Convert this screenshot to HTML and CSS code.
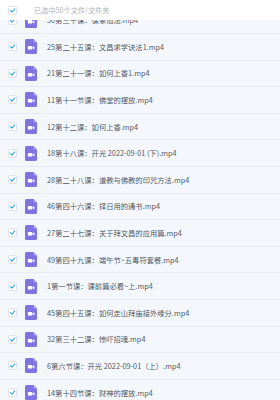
FILE: index.html
```html
<!DOCTYPE html>
<html lang="zh-CN">
  <head>
    <meta charset="utf-8">
    <title>已选中文件</title>
    <link rel="stylesheet" href="styles.css">
  </head>
  <body>
    <div class="picker">
      <div class="picker-head">
        <span class="check"><svg viewBox="0 0 10 10"><path d="M2 5.2 L4.2 7.3 L8.2 2.8"/></svg></span>
        <span class="head-text">已选中50个文件/文件夹</span>
      </div>
      <ul class="files" id="files"></ul>
    </div>
    <script>
      var names = [
        '30第三十课：保家仙法.mp4',
        '25第二十五课：文昌求学诀法1.mp4',
        '21第二十一课：如何上香1.mp4',
        '11第十一节课：佛堂的摆放.mp4',
        '12第十二课：如何上香.mp4',
        '18第十八课：开光 2022-09-01 (下).mp4',
        '28第二十八课：道教与佛教的印咒方法.mp4',
        '46第四十六课：择日用的通书.mp4',
        '27第二十七课：关于拜文昌的应用篇.mp4',
        '49第四十九课：端午节~五毒符套餐.mp4',
        '1第一节课：课前篇必看~上.mp4',
        '45第四十五课：如何走山拜庙接外缘分.mp4',
        '32第三十二课：惊吓招魂.mp4',
        '6第六节课：开光 2022-09-01（上）.mp4',
        '14第十四节课：财神的摆放.mp4'
      ];
      var list = document.getElementById('files');
      var icon = '<svg class="icon" viewBox="0 0 12 15">' +
        '<path class="sheet" d="M1.5 0 H8.5 L12 3.5 V13.5 Q12 15 10.5 15 H1.5 Q0 15 0 13.5 V1.5 Q0 0 1.5 0 Z"/>' +
        '<path class="fold" d="M8.5 0 L12 3.5 H9.5 Q8.5 3.5 8.5 2.5 Z"/>' +
        '<rect class="cam" x="2.8" y="7" width="4.4" height="3.6" rx="0.7"/>' +
        '<path class="cam" d="M7.4 8.3 L9.4 7.2 V10.4 L7.4 9.3 Z"/></svg>';
      var check = '<span class="check"><svg viewBox="0 0 10 10"><path d="M2 5.2 L4.2 7.3 L8.2 2.8"/></svg></span>';
      for (var i = 0; i < names.length; i++) {
        var li = document.createElement('li');
        li.className = 'file';
        li.innerHTML = check + icon + '<span class="name">' + names[i] + '</span>';
        list.appendChild(li);
      }
    </script>
  </body>
</html>
```

FILE: styles.css
```css
html, body {
  margin: 0;
  height: 100%;
  overflow: hidden;
  background: #fff;
  font-family: "Noto Sans CJK SC", "Noto Sans", sans-serif;
}

.picker {
  position: relative;
  height: 400px;
  overflow: hidden;
}

.picker-head {
  position: absolute;
  top: 0;
  left: 0;
  right: 0;
  height: 20px;
  z-index: 2;
  background: #fff;
  display: flex;
  align-items: center;
  padding-left: 8px;
}

.head-text {
  margin-left: 17px;
  font-size: 7.2px;
  color: #b0b4ba;
}

.check {
  width: 9px;
  height: 9px;
  box-sizing: border-box;
  border: 1px solid #dde3ea;
  border-radius: 1.5px;
  background: #fff;
  display: flex;
  flex-shrink: 0;
}

.check svg {
  width: 100%;
  height: 100%;
}

.check path {
  fill: none;
  stroke: #35a2dd;
  stroke-width: 1.5;
  stroke-linecap: round;
  stroke-linejoin: round;
}

.files {
  list-style: none;
  margin: 0;
  padding: 7.4px 0 0;
  background: #f4f8fd;
}

.file {
  height: 26.6px;
  box-sizing: border-box;
  border-bottom: 1px solid #e6ecf3;
  display: flex;
  align-items: center;
  padding-left: 8px;
}

.icon {
  width: 12px;
  height: 15px;
  margin-left: 8px;
  flex-shrink: 0;
}

.sheet {
  fill: #7f73e2;
}

.fold {
  fill: #aaa1ee;
}

.cam {
  fill: #fff;
}

.name {
  margin-left: 10px;
  font-size: 7.3px;
  color: #55595f;
  white-space: nowrap;
}
```
